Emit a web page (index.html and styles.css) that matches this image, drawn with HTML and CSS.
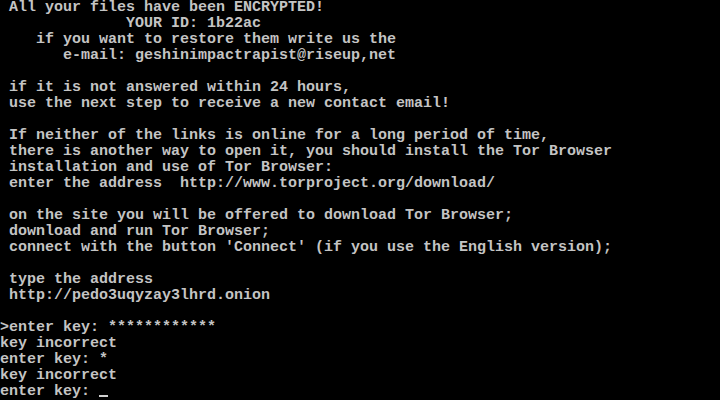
FILE: index.html
```html
<!DOCTYPE html>
<html>
<head>
  <title>Console</title>
  <link rel="stylesheet" href="styles.css">
</head>
<body>
  <pre class="screen"> All your files have been ENCRYPTED!
              YOUR ID: 1b22ac
    if you want to restore them write us the
       e-mail: geshinimpactrapist@riseup,net

 if it is not answered within 24 hours,
 use the next step to receive a new contact email!

 If neither of the links is online for a long period of time,
 there is another way to open it, you should install the Tor Browser
 installation and use of Tor Browser:
 enter the address  http://www.torproject.org/download/

 on the site you will be offered to download Tor Browser;
 download and run Tor Browser;
 connect with the button 'Connect' (if you use the English version);

 type the address
 http://pedo3uqyzay3lhrd.onion

>enter key: ************
key incorrect
enter key: *
key incorrect
enter key: <span class="cursor"></span></pre>
</body>
</html>
```

FILE: styles.css
```css
html, body {
  margin: 0;
  background: #000;
}

.screen {
  margin: 0;
  width: 720px;
  height: 400px;
  overflow: hidden;
  color: #c4c4c4;
  font-family: "Liberation Mono", "DejaVu Sans Mono", monospace;
  font-size: 15px;
  font-weight: bold;
  line-height: 16px;
  white-space: pre;
}

.cursor {
  display: inline-block;
  width: 9px;
  height: 2px;
  margin-bottom: -2px;
  background: #d0d0d0;
}
```
